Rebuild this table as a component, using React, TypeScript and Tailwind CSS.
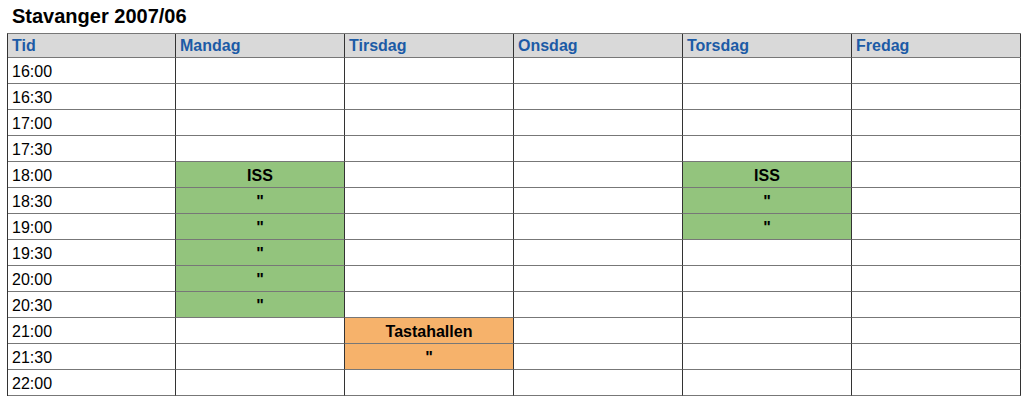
const days = ["Mandag", "Tirsdag", "Onsdag", "Torsdag", "Fredag"];

const times = [
  "16:00", "16:30", "17:00", "17:30", "18:00", "18:30", "19:00",
  "19:30", "20:00", "20:30", "21:00", "21:30", "22:00",
];

type Booking = { text: string; color: string };

// key: "time|dayIndex"
const bookings: Record<string, Booking> = {
  "18:00|0": { text: "ISS", color: "bg-[#93c47d]" },
  "18:30|0": { text: "\"", color: "bg-[#93c47d]" },
  "19:00|0": { text: "\"", color: "bg-[#93c47d]" },
  "19:30|0": { text: "\"", color: "bg-[#93c47d]" },
  "20:00|0": { text: "\"", color: "bg-[#93c47d]" },
  "20:30|0": { text: "\"", color: "bg-[#93c47d]" },
  "18:00|3": { text: "ISS", color: "bg-[#93c47d]" },
  "18:30|3": { text: "\"", color: "bg-[#93c47d]" },
  "19:00|3": { text: "\"", color: "bg-[#93c47d]" },
  "21:00|1": { text: "Tastahallen", color: "bg-[#f6b26b]" },
  "21:30|1": { text: "\"", color: "bg-[#f6b26b]" },
};

export default function App() {
  return (
    <div className="min-h-[401px] bg-white px-[7px] font-['Liberation_Sans',Arial,sans-serif] text-black">
      <h1 className="pl-[5px] pt-[5px] pb-[5px] text-[20px] font-bold leading-[23px]">Stavanger 2007/06</h1>

      <div className="grid w-[1014px] grid-cols-[168px_169px_169px_169px_169px_169px] border-l border-t border-l-[#333] border-t-[#777] text-[16px] leading-[18px]">
        {/* Header */}
        {["Tid", ...days].map((h) => (
          <div
            key={h}
            className="flex h-[24px] items-center border-b border-r border-b-[#777] border-r-[#333] bg-[#d9d9d9] px-1 pt-[1px] font-bold text-[#1c5ba6]"
          >
            {h}
          </div>
        ))}

        {/* Rows */}
        {times.map((t) => (
          <div key={t} className="contents">
            <div className="flex h-[26px] items-center border-b border-r border-b-[#777] border-r-[#333] px-1 pt-[2px]">
              {t}
            </div>
            {days.map((d, i) => {
              const b = bookings[`${t}|${i}`];
              return (
                <div
                  key={d}
                  className={`flex h-[26px] items-center justify-center border-b border-r border-b-[#777] border-r-[#333] px-1 pt-[2px] font-bold ${
                    b ? b.color : "bg-white"
                  }`}
                >
                  {b?.text}
                </div>
              );
            })}
          </div>
        ))}
      </div>
    </div>
  );
}
